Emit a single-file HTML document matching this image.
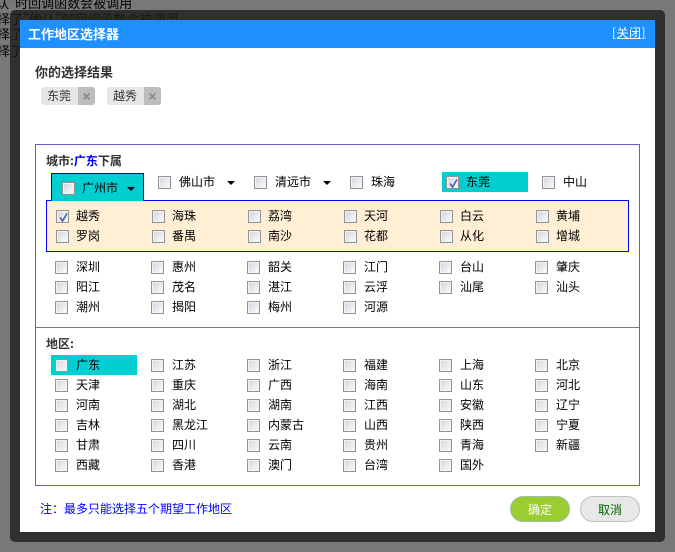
<!DOCTYPE html>
<html lang="zh"><head><meta charset="utf-8">
<style>
html,body{margin:0;padding:0;width:675px;height:552px;overflow:hidden;background:#fff}
*{box-sizing:border-box}
body{font-family:"WenQuanYi Zen Hei","Noto Sans CJK SC",sans-serif;font-size:12px;color:#000;position:relative}
.bgt{position:absolute;font-size:13px;line-height:15px;white-space:nowrap;color:#000}
.ov{position:absolute;left:0;top:0;width:675px;height:552px;background:rgba(0,0,0,.53)}
.frame{position:absolute;left:10px;top:10px;width:655px;height:532px;background:rgba(29,29,29,.8);border-radius:5px}
.a{position:absolute;white-space:nowrap}
.t{position:absolute;white-space:nowrap;line-height:14px;height:14px;font-size:12px;color:#000}
.c{position:absolute;width:13px;height:13px;border:1px solid #939393;background:linear-gradient(135deg,#cfd2dc 0%,#e6e8ee 50%,#fff 100%);box-shadow:inset 0 0 0 1px #f2f2f2}
.c svg{position:absolute;left:1px;top:1px}
.x{position:absolute;left:37px;top:0;width:17px;height:18px;background:#bdbdbd;color:#7a8a9a;font:bold 14px/18px "Liberation Sans",sans-serif;text-align:center}
</style></head><body>
<div class="bgt" style="top:-5px;left:-4px">认"时回调函数会被调用</div>
<div class="bgt" style="top:11px;left:-3px">择了"确认"时回调函数会被调用</div>
<div class="bgt" style="top:26px;left:-3px">择了"确认"时回调函数会被调用</div>
<div class="bgt" style="top:43px;left:-3px">择了"确认"时回调函数会被调用</div>
<div class="ov"></div>
<div class="frame"></div>
<div class="a" style="left:20px;top:20px;width:635px;height:512px;background:#fff"></div>
<div class="a" style="left:20px;top:20px;width:635px;height:28px;background:#1e90ff"></div>
<div class="a" style="left:28px;top:27px;font-size:13px;font-weight:bold;line-height:14px;color:#fff">工作地区选择器</div>
<div class="a" style="left:612px;top:26px;font-size:12px;line-height:14px;color:#fff;text-decoration:underline;letter-spacing:.5px">[关闭]</div>
<div class="a" style="left:35px;top:65px;font-size:13px;font-weight:bold;line-height:14px;color:#333">你的选择结果</div>

<div class="a" style="left:41px;top:87px;width:54px;height:18px;background:#e6e6e6;border-radius:3px;overflow:hidden"><div class="x">×</div></div>
<div class="t" style="left:47px;top:89px;color:#333">东莞</div>
<div class="a" style="left:107px;top:87px;width:54px;height:18px;background:#e6e6e6;border-radius:3px;overflow:hidden"><div class="x">×</div></div>
<div class="t" style="left:113px;top:89px;color:#333">越秀</div>

<div class="a" style="left:35px;top:144px;width:605px;height:342px;border:1px solid #6a5acd"></div>
<div class="a" style="left:36px;top:327px;width:603px;height:1px;background:#777"></div>
<div class="a" style="left:46px;top:154px;font-size:12px;font-weight:bold;line-height:14px;color:#333">城市:<span style="color:#00f">广东</span>下属</div>
<div class="a" style="left:46px;top:337px;font-size:12px;font-weight:bold;line-height:14px;color:#333">地区:</div>

<div class="a" style="left:46px;top:200px;width:583px;height:52px;background:#ffefd5;border:1px solid #00f"></div>
<div class="a" style="left:51px;top:173px;width:93px;height:28px;background:#00ced1;border:1px solid #00f;border-bottom:none"></div>
<div class="a" style="left:442px;top:172px;width:86px;height:20px;background:#00ced1"></div>
<div class="a" style="left:51px;top:355px;width:86px;height:20px;background:#00ced1"></div>

<div class="a" style="left:127px;top:187px;width:0;height:0;border:4px solid transparent;border-top-color:#000;border-bottom:none"></div>
<div class="a" style="left:227px;top:181px;width:0;height:0;border:4px solid transparent;border-top-color:#000;border-bottom:none"></div>
<div class="a" style="left:323px;top:181px;width:0;height:0;border:4px solid transparent;border-top-color:#000;border-bottom:none"></div>

<i class="c" style="left:62px;top:182px"></i><div class="t" style="left:82px;top:181px">广州市</div>
<i class="c" style="left:158px;top:176px"></i><div class="t" style="left:179px;top:175px">佛山市</div>
<i class="c" style="left:254px;top:176px"></i><div class="t" style="left:275px;top:175px">清远市</div>
<i class="c" style="left:350px;top:176px"></i><div class="t" style="left:371px;top:175px">珠海</div>
<i class="c" style="left:446px;top:176px"><svg width="11" height="11" viewBox="0 0 11 11"><path d="M2 5.5 L4.5 9 L9 1.5" fill="none" stroke="#4a5aa8" stroke-width="1.6"/></svg></i><div class="t" style="left:466px;top:175px">东莞</div>
<i class="c" style="left:542px;top:176px"></i><div class="t" style="left:563px;top:175px">中山</div>

<i class="c" style="left:56px;top:210px"><svg width="11" height="11" viewBox="0 0 11 11"><path d="M2 5.5 L4.5 9 L9 1.5" fill="none" stroke="#4a5aa8" stroke-width="1.6"/></svg></i><div class="t" style="left:76px;top:209px">越秀</div>
<i class="c" style="left:152px;top:210px"></i><div class="t" style="left:172px;top:209px">海珠</div>
<i class="c" style="left:248px;top:210px"></i><div class="t" style="left:268px;top:209px">荔湾</div>
<i class="c" style="left:344px;top:210px"></i><div class="t" style="left:364px;top:209px">天河</div>
<i class="c" style="left:440px;top:210px"></i><div class="t" style="left:460px;top:209px">白云</div>
<i class="c" style="left:536px;top:210px"></i><div class="t" style="left:556px;top:209px">黄埔</div>
<i class="c" style="left:56px;top:230px"></i><div class="t" style="left:76px;top:229px">罗岗</div>
<i class="c" style="left:152px;top:230px"></i><div class="t" style="left:172px;top:229px">番禺</div>
<i class="c" style="left:248px;top:230px"></i><div class="t" style="left:268px;top:229px">南沙</div>
<i class="c" style="left:344px;top:230px"></i><div class="t" style="left:364px;top:229px">花都</div>
<i class="c" style="left:440px;top:230px"></i><div class="t" style="left:460px;top:229px">从化</div>
<i class="c" style="left:536px;top:230px"></i><div class="t" style="left:556px;top:229px">增城</div>

<i class="c" style="left:55px;top:261px"></i><div class="t" style="left:76px;top:260px">深圳</div>
<i class="c" style="left:151px;top:261px"></i><div class="t" style="left:172px;top:260px">惠州</div>
<i class="c" style="left:247px;top:261px"></i><div class="t" style="left:268px;top:260px">韶关</div>
<i class="c" style="left:343px;top:261px"></i><div class="t" style="left:364px;top:260px">江门</div>
<i class="c" style="left:439px;top:261px"></i><div class="t" style="left:460px;top:260px">台山</div>
<i class="c" style="left:535px;top:261px"></i><div class="t" style="left:556px;top:260px">肇庆</div>
<i class="c" style="left:55px;top:281px"></i><div class="t" style="left:76px;top:280px">阳江</div>
<i class="c" style="left:151px;top:281px"></i><div class="t" style="left:172px;top:280px">茂名</div>
<i class="c" style="left:247px;top:281px"></i><div class="t" style="left:268px;top:280px">湛江</div>
<i class="c" style="left:343px;top:281px"></i><div class="t" style="left:364px;top:280px">云浮</div>
<i class="c" style="left:439px;top:281px"></i><div class="t" style="left:460px;top:280px">汕尾</div>
<i class="c" style="left:535px;top:281px"></i><div class="t" style="left:556px;top:280px">汕头</div>
<i class="c" style="left:55px;top:301px"></i><div class="t" style="left:76px;top:300px">潮州</div>
<i class="c" style="left:151px;top:301px"></i><div class="t" style="left:172px;top:300px">揭阳</div>
<i class="c" style="left:247px;top:301px"></i><div class="t" style="left:268px;top:300px">梅州</div>
<i class="c" style="left:343px;top:301px"></i><div class="t" style="left:364px;top:300px">河源</div>

<i class="c" style="left:55px;top:359px"></i><div class="t" style="left:76px;top:358px">广东</div>
<i class="c" style="left:151px;top:359px"></i><div class="t" style="left:172px;top:358px">江苏</div>
<i class="c" style="left:247px;top:359px"></i><div class="t" style="left:268px;top:358px">浙江</div>
<i class="c" style="left:343px;top:359px"></i><div class="t" style="left:364px;top:358px">福建</div>
<i class="c" style="left:439px;top:359px"></i><div class="t" style="left:460px;top:358px">上海</div>
<i class="c" style="left:535px;top:359px"></i><div class="t" style="left:556px;top:358px">北京</div>
<i class="c" style="left:55px;top:379px"></i><div class="t" style="left:76px;top:378px">天津</div>
<i class="c" style="left:151px;top:379px"></i><div class="t" style="left:172px;top:378px">重庆</div>
<i class="c" style="left:247px;top:379px"></i><div class="t" style="left:268px;top:378px">广西</div>
<i class="c" style="left:343px;top:379px"></i><div class="t" style="left:364px;top:378px">海南</div>
<i class="c" style="left:439px;top:379px"></i><div class="t" style="left:460px;top:378px">山东</div>
<i class="c" style="left:535px;top:379px"></i><div class="t" style="left:556px;top:378px">河北</div>
<i class="c" style="left:55px;top:399px"></i><div class="t" style="left:76px;top:398px">河南</div>
<i class="c" style="left:151px;top:399px"></i><div class="t" style="left:172px;top:398px">湖北</div>
<i class="c" style="left:247px;top:399px"></i><div class="t" style="left:268px;top:398px">湖南</div>
<i class="c" style="left:343px;top:399px"></i><div class="t" style="left:364px;top:398px">江西</div>
<i class="c" style="left:439px;top:399px"></i><div class="t" style="left:460px;top:398px">安徽</div>
<i class="c" style="left:535px;top:399px"></i><div class="t" style="left:556px;top:398px">辽宁</div>
<i class="c" style="left:55px;top:419px"></i><div class="t" style="left:76px;top:418px">吉林</div>
<i class="c" style="left:151px;top:419px"></i><div class="t" style="left:172px;top:418px">黑龙江</div>
<i class="c" style="left:247px;top:419px"></i><div class="t" style="left:268px;top:418px">内蒙古</div>
<i class="c" style="left:343px;top:419px"></i><div class="t" style="left:364px;top:418px">山西</div>
<i class="c" style="left:439px;top:419px"></i><div class="t" style="left:460px;top:418px">陕西</div>
<i class="c" style="left:535px;top:419px"></i><div class="t" style="left:556px;top:418px">宁夏</div>
<i class="c" style="left:55px;top:439px"></i><div class="t" style="left:76px;top:438px">甘肃</div>
<i class="c" style="left:151px;top:439px"></i><div class="t" style="left:172px;top:438px">四川</div>
<i class="c" style="left:247px;top:439px"></i><div class="t" style="left:268px;top:438px">云南</div>
<i class="c" style="left:343px;top:439px"></i><div class="t" style="left:364px;top:438px">贵州</div>
<i class="c" style="left:439px;top:439px"></i><div class="t" style="left:460px;top:438px">青海</div>
<i class="c" style="left:535px;top:439px"></i><div class="t" style="left:556px;top:438px">新疆</div>
<i class="c" style="left:55px;top:459px"></i><div class="t" style="left:76px;top:458px">西藏</div>
<i class="c" style="left:151px;top:459px"></i><div class="t" style="left:172px;top:458px">香港</div>
<i class="c" style="left:247px;top:459px"></i><div class="t" style="left:268px;top:458px">澳门</div>
<i class="c" style="left:343px;top:459px"></i><div class="t" style="left:364px;top:458px">台湾</div>
<i class="c" style="left:439px;top:459px"></i><div class="t" style="left:460px;top:458px">国外</div>

<div class="t" style="left:40px;top:502px;color:#00f">注：最多只能选择五个期望工作地区</div>
<div class="a" style="left:510px;top:496px;width:60px;height:26px;border-radius:13px;background:#9acd32;border:1px solid #a0c0a0;color:#fff;text-align:center;line-height:25px">确定</div>
<div class="a" style="left:580px;top:496px;width:60px;height:26px;border-radius:13px;background:#e8e8e8;border:1px solid #c0c0c0;color:#006400;text-align:center;line-height:25px">取消</div>
</body></html>
